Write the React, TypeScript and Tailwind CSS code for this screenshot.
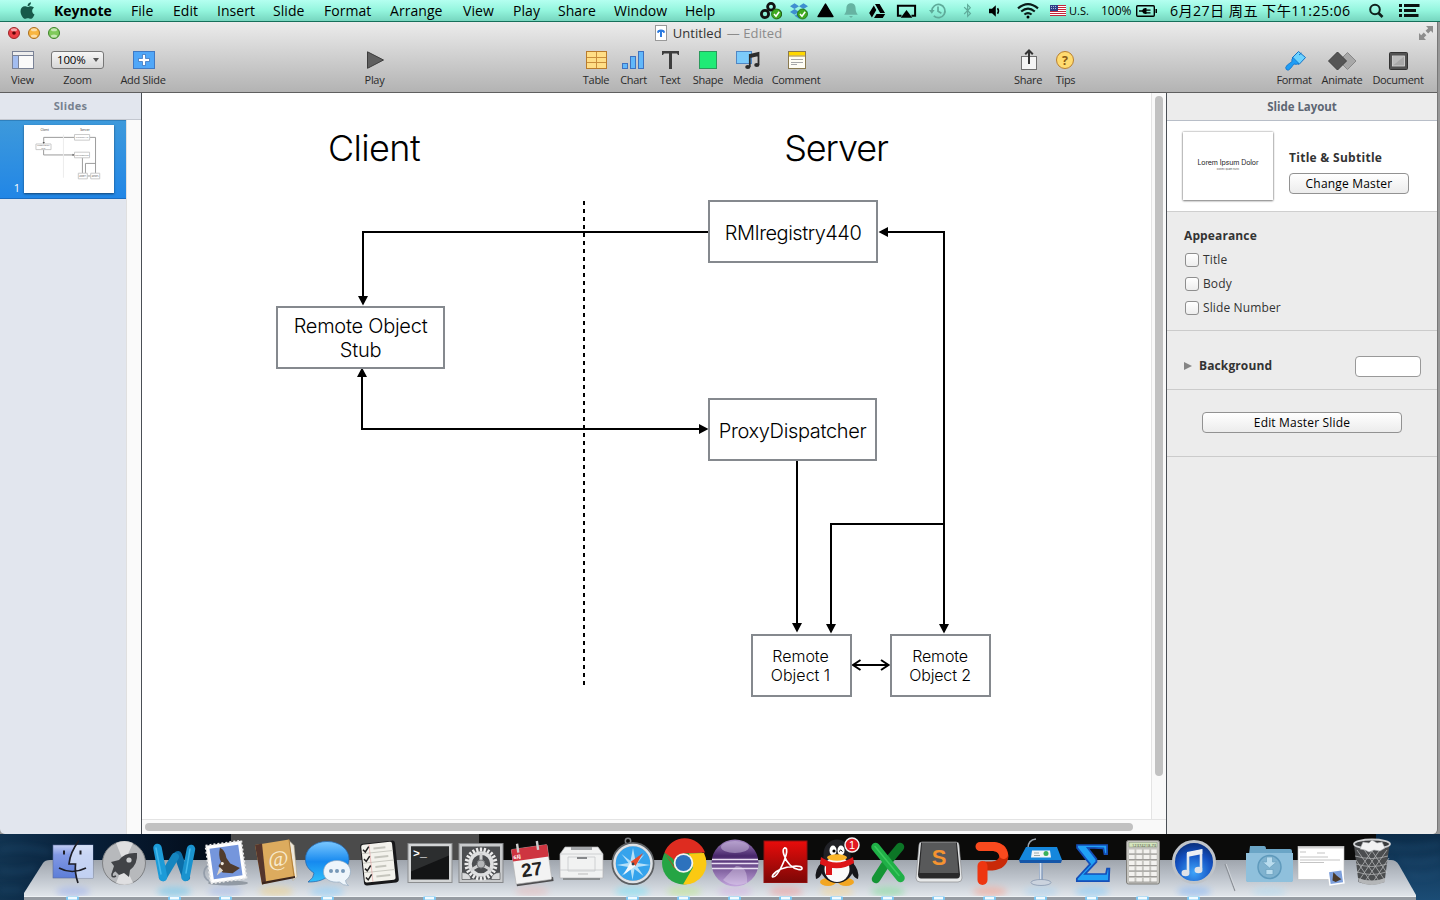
import type { ReactNode } from "react";
import { FaApple, FaDropbox, FaBluetoothB } from "react-icons/fa";

const menus: [string, string][] = [
  ["File", "w-[42px]"],
  ["Edit", "w-[44px]"],
  ["Insert", "w-[56px]"],
  ["Slide", "w-[51px]"],
  ["Format", "w-[66px]"],
  ["Arrange", "w-[73px]"],
  ["View", "w-[50px]"],
  ["Play", "w-[45px]"],
  ["Share", "w-[56px]"],
  ["Window", "w-[71px]"],
  ["Help", "w-[75px]"],
];

function BarIcon({ x, w, cls, children }: { x: number; w: number; cls: string; children: ReactNode }) {
  return (
    <svg viewBox={`${x} 0 ${w} 22`} className={`h-[22px] shrink-0 overflow-visible ${cls}`}>
      {children}
    </svg>
  );
}

function Check({ x, y }: { x: number; y: number }) {
  return (
    <g>
      <circle cx={x} cy={y} r="5" fill="#3faa22" stroke="#1f6b10" strokeWidth=".8" />
      <path d={`M${x - 2.5} ${y}l2 2.2 3.2-4.4`} fill="none" stroke="#fff" strokeWidth="1.6" />
    </g>
  );
}

function MenuBar() {
  return (
    <header className="flex h-[22px] shrink-0 items-center overflow-hidden border-b border-[#17705b] bg-linear-to-b from-[#b4fff0] via-[#93f5dd] to-[#76d6bf] text-[14px] leading-[21px] whitespace-nowrap text-black">
      <div className="flex w-[54px] shrink-0 pl-[18px]">
        <FaApple className="h-[19px] w-[19px] text-[#17594a]" />
      </div>
      <div className="w-[77px] shrink-0 text-[14px] font-bold">Keynote</div>
      {menus.map(([label, w]) => (
        <div key={label} className={`shrink-0 tracking-[0.05px] ${w}`}>
          {label}
        </div>
      ))}
      <BarIcon x={760} w={30} cls="w-[30px]">
        <g fill="none" stroke="#111" strokeWidth="2.8">
          <circle cx="771" cy="6.800" r="3.400" />
          <circle cx="765" cy="14" r="3.600" />
          <circle cx="777" cy="14" r="3.600" />
        </g>
        <Check x={776.5} y={14} />
      </BarIcon>
      <div className="relative h-[22px] w-[27px] shrink-0 pt-[2px]">
        <FaDropbox className="h-[18px] w-[18px] text-[#3f8fd0]" />
        <svg viewBox="790 0 27 22" className="absolute inset-0 h-[22px] w-[27px]">
          <Check x={802.5} y={14} />
        </svg>
      </div>
      <BarIcon x={817} w={27} cls="w-[27px]">
        <path d="M825.5 4l7.500 12.500h-15z" fill="#000" stroke="#000" strokeWidth="1.400" strokeLinejoin="round" />
      </BarIcon>
      <BarIcon x={844} w={25} cls="w-[25px]">
        <path d="M851 3.300c3.200 0 4.600 2.200 4.600 5 0 3.200.8 4.500 2.200 6.500h-13.600c1.400-2 2.200-3.300 2.200-6.500 0-2.800 1.400-5 4.600-5zM849 16h4l-2 2z" fill="#66b3a2" />
      </BarIcon>
      <BarIcon x={869} w={28} cls="w-[28px]">
        <path d="M875 4h4.600l5.400 9h-4.800zM873.800 5.500l2.500 4.500-4.400 7.500-2.700-4.500zM876.500 14h8.700l-2.500 4h-8.700z" fill="#000" />
      </BarIcon>
      <BarIcon x={897} w={32} cls="w-[32px]">
        <path d="M901.500 15.800h-3.600v-10h17.200v10h-3.600" fill="none" stroke="#000" strokeWidth="2" />
        <path d="M906.500 10l5.800 7.800h-11.600z" fill="#000" />
      </BarIcon>
      <BarIcon x={929} w={34} cls="w-[34px]">
        <path d="M931.800 11a6.600 6.600 0 1 1 2 4.800M938 6.500v4.800l3.400 2" fill="none" stroke="#5fab9a" strokeWidth="1.700" />
        <path d="M929 10h5.600l-2.800 3.800z" fill="#5fab9a" />
      </BarIcon>
      <div className="flex w-[26px] shrink-0">
        <FaBluetoothB className="h-[15px] w-[9px] text-[#5fab9a]" />
      </div>
      <BarIcon x={989} w={28} cls="w-[28px]">
        <path d="M989 8.800h3l3.800-3.600v11.600l-3.800-3.600h-3z" fill="#000" />
        <path d="M997.500 8.300q2 2.700 0 5.400" fill="none" stroke="#000" strokeWidth="1.500" />
      </BarIcon>
      <BarIcon x={1017} w={33} cls="w-[33px]">
        <g fill="none" stroke="#0a1c18" strokeWidth="2.200">
          <path d="M1018 8.300q10-8.500 20 0M1021.200 11.500q6.800-5.600 13.600 0M1024.400 14.500q3.600-2.800 7.200 0" />
        </g>
        <circle cx="1028" cy="17" r="1.500" />
      </BarIcon>
      <BarIcon x={1050} w={19} cls="w-[19px]">
        <rect x="1050" y="5" width="16" height="11" fill="#fff" />
        <path d="M1050 5.500h16M1050 7.500h16M1050 9.500h16M1050 11.500h16M1050 13.500h16M1050 15.500h16" stroke="#c2263a" strokeWidth="1" />
        <rect x="1050" y="5" width="8" height="6" fill="#2c3f87" />
        <path d="M1051 6.500h6M1051 8.500h6" stroke="#cdd4ee" strokeWidth=".8" strokeDasharray="1 1" />
      </BarIcon>
      <div className="w-[32px] shrink-0 text-[11px]">U.S.</div>
      <div className="w-[35px] shrink-0 text-[12px]">100%</div>
      <BarIcon x={1136} w={34} cls="w-[34px]">
        <rect x="1136.700" y="5.700" width="17.600" height="10.600" rx="1" fill="none" stroke="#000" strokeWidth="1.400" />
        <path d="M1155.500 9h1.500v4h-1.500zM1139 10.300h3.200q1-2.300 3.300-2.300h1v1.500h4v1.300h-4v1.400h4v1.300h-4v.5h-1q-2.300 0-3.300-2.200h-3.200z" />
      </BarIcon>
      <div className="w-[199px] shrink-0 text-[14.200px] tracking-[0.4px]">6月27日 周五 下午11:25:06</div>
      <BarIcon x={1369} w={30} cls="w-[30px]">
        <circle cx="1375" cy="9.500" r="4.800" fill="none" stroke="#10201c" strokeWidth="2" />
        <path d="M1378.500 13l4 4" stroke="#10201c" strokeWidth="2.600" />
      </BarIcon>
      <BarIcon x={1399} w={24} cls="w-[24px]">
        <path d="M1399 5.500h3M1399 10.500h3M1399 15.500h3M1404 5.500h15.500M1404 10.500h12M1404 15.500h14.500" stroke="#0a1210" strokeWidth="2.800" />
      </BarIcon>
    </header>
  );
}

function Tool({ label, x, w, cls, children }: { label: string; x: number; w: number; cls: string; children: ReactNode }) {
  return (
    <div className={`flex shrink-0 flex-col items-center ${cls}`}>
      <svg viewBox={`${x} 48 ${w} 24`} className="h-6 w-full overflow-visible">
        {children}
      </svg>
      <span className="mt-px text-[11px] leading-[14px] tracking-[-0.3px] whitespace-nowrap text-[#2b2b2b]">{label}</span>
    </div>
  );
}

function TitleBar() {
  return (
    <div className="h-[71px] shrink-0 border-b border-[#5f5f5f] bg-linear-to-b from-[#ececec] to-[#b3b3b3]">
      <div className="relative flex h-[22px] items-center justify-center text-[13px]">
        <svg viewBox="0 22 62 22" className="absolute top-0 left-0 h-[22px] w-[62px]">
          <circle cx="14" cy="33" r="5.500" fill="#ee3f45" stroke="#9c2527" />
          <circle cx="14" cy="33" r="1.800" fill="#5e0508" />
          <circle cx="34" cy="33" r="5.500" fill="#f8b53f" stroke="#a86d1e" />
          <circle cx="54" cy="33" r="5.500" fill="#7fca5a" stroke="#3d822a" />
          <g fill="#fff" opacity=".55">
            <ellipse cx="14" cy="29.700" rx="3" ry="1.500" />
            <ellipse cx="34" cy="29.700" rx="3" ry="1.500" />
            <ellipse cx="54" cy="29.700" rx="3" ry="1.500" />
            <ellipse cx="34" cy="36" rx="3" ry="1.500" />
            <ellipse cx="54" cy="36" rx="3" ry="1.500" />
          </g>
        </svg>
        <svg viewBox="655 25 12 16" className="h-4 w-3">
          <rect x="655.500" y="25.500" width="11" height="15" fill="#fff" stroke="#999" />
          <path d="M657 32.500q0-3 4-3t4 3l-2 .5v-1h-4v1zM660 32h2v5h-2z" fill="#2d7be0" />
        </svg>
        <span className="ml-[6px] leading-[22px] tracking-[0.05px] text-[#333]">Untitled</span>
        <span className="ml-[5px] leading-[22px] tracking-[0.1px] text-[#8b8b8b]">— Edited</span>
        <svg viewBox="1418 25 16 16" className="absolute top-[3px] right-[3px] h-4 w-4">
          <path d="M1426 26h7v7l-2.200-2.200-2.600 2.600-2.600-2.600 2.600-2.600zM1419 33v7h7l-2.200-2.200 2.600-2.600-2.600-2.600-2.600 2.600z" fill="#8d8d8d" />
        </svg>
      </div>
      <div className="mt-1 flex">
        <Tool label="View" x={0} w={45} cls="w-[45px]">
          <rect x="12.500" y="51.500" width="21" height="17" fill="#fafafa" stroke="#7a8296" />
          <path d="M13 52h20v3H13z" fill="#ededed" />
          <path d="M13 56h5v12h-5z" fill="#a3bdf0" />
          <path d="M12.500 55.500h21M18.500 55.500v13" stroke="#7a8296" />
        </Tool>
        <div className="flex w-[65px] shrink-0 flex-col items-center">
          <div className="mt-[3px] mb-[3px] flex h-[18px] w-[53px] items-center rounded-[3px] border border-[#777] bg-linear-to-b from-[#f7f7f7] to-[#d6d6d6] pl-[5px] text-[11.500px] leading-4 tracking-[-0.2px] text-black">
            100%
            <span className="ml-[8px] border-x-[3px] border-t-[4px] border-x-transparent border-t-[#555]" />
          </div>
          <span className="mt-px text-[11px] leading-[14px] tracking-[-0.3px] text-[#2b2b2b]">Zoom</span>
        </div>
        <Tool label="Add Slide" x={110} w={66} cls="w-[66px]">
          <rect x="133.500" y="51.500" width="21" height="17" fill="#50a7f8" stroke="#3f79c4" />
          <path d="M142.500 54.500h3v4h4v3h-4v4h-3v-4h-4v-3h4z" fill="#fff" stroke="#2f68b4" strokeWidth=".7" />
        </Tool>
        <Tool label="Play" x={345} w={59} cls="ml-[169px] w-[59px]">
          <path d="M367.500 51.800v16.500l16-8.300z" fill="#5f5f5f" stroke="#3c3c3c" />
        </Tool>
        <Tool label="Table" x={577} w={38} cls="ml-[173px] w-[38px]">
          <rect x="586.500" y="51.500" width="20" height="17" fill="#ffde86" stroke="#b97b2c" />
          <path d="M596.500 52v16M587 57.500h19M587 62.500h19" stroke="#c98e3c" />
        </Tool>
        <Tool label="Chart" x={615} w={37} cls="w-[37px]">
          <g fill="#62b8fa" stroke="#3f72c0">
            <rect x="622.500" y="63.500" width="5" height="5" />
            <rect x="630.500" y="56.500" width="5" height="12" />
            <rect x="638.500" y="51.500" width="5" height="17" />
          </g>
        </Tool>
        <Tool label="Text" x={652} w={36} cls="w-[36px]">
          <path d="M662 51h17v4h-1l-1-1.500h-5V69h-3V53.500h-5l-1 1.500h-1z" fill="#3d3d3d" />
        </Tool>
        <Tool label="Shape" x={688} w={40} cls="w-[40px]">
          <rect x="699.500" y="51.500" width="17" height="17" fill="#1feb76" stroke="#2a9a5c" />
        </Tool>
        <Tool label="Media" x={728} w={40} cls="w-[40px]">
          <rect x="736.500" y="51.500" width="15" height="12" fill="#7ccbfb" stroke="#4f86c4" />
          <path d="M750 55l8.500-2v12M749.800 54v13M750 57l8.500-2" fill="none" stroke="#2c2c2c" strokeWidth="1.800" />
          <ellipse cx="747.800" cy="67" rx="2.600" ry="1.900" fill="#2c2c2c" />
          <ellipse cx="756.800" cy="65" rx="2.600" ry="1.900" fill="#2c2c2c" />
        </Tool>
        <Tool label="Comment" x={768} w={56} cls="w-[56px]">
          <rect x="788.500" y="51.500" width="17" height="17" fill="#fffdf4" stroke="#8a7a50" />
          <path d="M789 52h16v3.500h-16z" fill="#ffd800" />
          <path d="M789 56h16" stroke="#a08530" />
          <path d="M791 59.500h12M791 62.500h12M791 64.500h6" stroke="#a8a8a8" />
        </Tool>
        <Tool label="Share" x={1010} w={36} cls="ml-[186px] w-[36px]">
          <rect x="1021.500" y="56.500" width="15" height="13" fill="#f4f4f4" stroke="#707070" />
          <path d="M1029 64V51M1025.200 54.200l3.800-3.700 3.800 3.700" fill="none" stroke="#333" strokeWidth="2" />
        </Tool>
        <Tool label="Tips" x={1046} w={39} cls="w-[39px]">
          <circle cx="1065" cy="60" r="8.500" fill="#ffdb70" stroke="#b98030" />
          <text x="1065" y="64.500" textAnchor="middle" fontSize="12.500" fontWeight="700" fill="#8a5a14">?</text>
        </Tool>
        <Tool label="Format" x={1272} w={44} cls="ml-[187px] w-[44px]">
          <path d="M1298.500 51.500l7 6-6.500 7-7-6.500z" fill="#6ed3ff" stroke="#1272c8" strokeLinejoin="round" />
          <path d="M1293 57.500l6 6q-3 1.500-5 .5l-3.500 4.500q-2.500 3-4.200 1t1-4.500l4.700-3.500q-.7-2 1-4z" fill="#1f9df5" stroke="#1272c8" strokeWidth=".8" />
          <path d="M1299 55l2.500-2" stroke="#1272c8" />
        </Tool>
        <Tool label="Animate" x={1316} w={52} cls="w-[52px]">
          <path d="M1347.500 52.500l8.500 8.500-8.500 8.500-8.500-8.500z" fill="#a8a8a8" stroke="#888" />
          <path d="M1337.500 52l9 9-9 9-9-9z" fill="#555" stroke="#3d3d3d" />
        </Tool>
        <Tool label="Document" x={1368} w={60} cls="w-[60px]">
          <rect x="1389.500" y="52.500" width="18" height="17" rx="1" fill="#535353" stroke="#333" />
          <rect x="1392.500" y="56" width="12" height="10" fill="#a8a8a8" stroke="#ddd" strokeWidth=".8" />
          <path d="M1393 65.500v-9h11z" fill="#bcbcbc" />
        </Tool>
      </div>
    </div>
  );
}

function Connectors() {
  return (
    <>
      <g fill="none" stroke="#000" strokeWidth="2">
        <path d="M708 232H363V297" />
        <path d="M362 375V429H700" />
        <path d="M887 232H944V626" />
        <path d="M944 524H831V626" />
        <path d="M797 461V625" />
        <path d="M584 201V685" strokeDasharray="4 4" />
        <path d="M854 665H888M860.500 660l-7.500 5 7.500 5M881 660l7.500 5-7.500 5" />
      </g>
      <path
        d="M358 296h10l-5 9.500zM357 377h10l-5-9.500zM699 424v10l9.500-5zM888 227v10l-9.500-5zM939 624h10l-5 9.500zM826 624h10l-5 9.500zM792 623h10l-5 9.500z"
        fill="#000"
      />
    </>
  );
}

function SlideList() {
  return (
    <aside className="flex w-[142px] shrink-0 flex-col border-r border-[#4a4f55] bg-[#e2e6ee]">
      <div className="h-[27px] border-b border-[#c3c7cf] text-center text-[11px] leading-[26px] font-bold tracking-[0.3px] text-[#76818f]">Slides</div>
      <div className="flex min-h-0 flex-1">
        <div className="w-[126px]">
          <div className="flex h-[79px] border-y border-t-[#2f80bd] border-b-[#1a6cc0] bg-linear-to-b from-[#3d99db] to-[#2186e6]">
            <span className="w-6 self-end pr-[4px] pb-[3px] text-right text-[11px] leading-[14px] text-white">1</span>
            <svg viewBox="142 93 1009 763" preserveAspectRatio="none" className="mt-[4px] h-[68px] w-[90px] bg-white shadow-[0_1px_2px_rgba(0,0,0,.5)]">
              <g fill="none" stroke="#9a9a9a" strokeWidth="11">
                <path d="M708 232H363V305M362 369V429H708M878 232H944V634M944 524H831V634M797 461V634M852 665H890" />
                <path d="M584 201V685" stroke="#ececec" />
              </g>
              <path d="M350 285h26l-13 22zM686 416v26l22-13z" fill="#555" />
              <g fill="#fff" stroke="#c4c4c4" strokeWidth="10">
                <path d="M708 200h170v63H708zM276 306h169v63H276zM708 398h169v63H708zM751 634h101v63H751zM890 634h101v63H890z" />
              </g>
              <g fill="#333" textAnchor="middle" fontSize="36">
                <text x="374" y="165">Client</text>
                <text x="826" y="165">Server</text>
              </g>
              <g fill="#555" textAnchor="middle" fontSize="20">
                <text x="793" y="240">RMIregistry440</text>
                <text x="360" y="334">Remote Object</text>
                <text x="360" y="358">Stub</text>
                <text x="793" y="437">ProxyDispatcher</text>
                <text x="801" y="662">Remote</text>
                <text x="801" y="682">Object 1</text>
                <text x="940" y="662">Remote</text>
                <text x="940" y="682">Object 2</text>
              </g>
            </svg>
          </div>
        </div>
        <div className="flex-1 border-l border-[#e0e0e0] bg-[#fafafa]" />
      </div>
    </aside>
  );
}

function Node({ cls, children }: { cls: string; children: ReactNode }) {
  return <div className={`absolute flex items-center justify-center border-2 border-[#85898e] bg-white text-center ${cls}`}>{children}</div>;
}

function Canvas() {
  return (
    <main className="flex min-w-0 flex-1 flex-col bg-white">
      <div className="flex min-h-0 flex-1">
        <div className="relative flex-1 font-[Inter,sans-serif] font-light text-black">
          <svg viewBox="142 93 1009 727" className="absolute top-0 left-0 h-[727px] w-[1009px]">
            <Connectors />
          </svg>
          <div className="absolute top-[33px] left-[132px] w-[200px] text-center text-[36px] leading-[44px] tracking-[-0.6px]">Client</div>
          <div className="absolute top-[33px] left-[594px] w-[200px] text-center text-[36px] leading-[44px] tracking-[-1.1px]">Server</div>
          <Node cls="top-[107px] left-[566px] h-[63px] w-[170px] pt-[2px] text-[20px] tracking-[-0.5px]">RMIregistry440</Node>
          <Node cls="top-[213px] left-[134px] h-[63px] w-[169px] pt-px text-[20px] leading-6 tracking-[-0.25px]">
            Remote Object
            <br />
            Stub
          </Node>
          <Node cls="top-[305px] left-[566px] h-[63px] w-[169px] pt-[2px] text-[20px] tracking-[-0.35px]">ProxyDispatcher</Node>
          <Node cls="top-[541px] left-[609px] h-[63px] w-[101px] pr-[2px] text-[16px] leading-[19px]">
            Remote
            <br />
            Object 1
          </Node>
          <Node cls="top-[541px] left-[748px] h-[63px] w-[101px] pr-px text-[16px] leading-[19px] tracking-[-0.15px]">
            Remote
            <br />
            Object 2
          </Node>
        </div>
        <div className="w-[15px] border-l border-[#e4e4e4] bg-[#f9f9f9] pt-[3px] pl-[3px]">
          <div className="h-[680px] w-2 rounded-full bg-[#c1c1c1]" />
        </div>
      </div>
      <div className="h-[15px] border-t border-[#e4e4e4] bg-[#f9f9f9] pt-[3px] pl-[3px]">
        <div className="h-2 w-[988px] rounded-full bg-[#c1c1c1]" />
      </div>
    </main>
  );
}

function Inspector() {
  return (
    <aside className="flex w-[271px] shrink-0 flex-col border-l border-[#4a4f55] bg-[#ececec] text-[12px] tracking-[0.12px] text-[#333]">
      <div className="h-[28px] border-b border-[#b8bec8] text-center text-[11.500px] leading-[28px] font-bold tracking-[-0.05px] text-[#5d6673]">Slide Layout</div>
      <div className="flex h-[91px] border-b border-[#cfcfcf] bg-white">
        <div className="mt-[11px] ml-[16px] flex h-[68px] w-[90px] flex-col items-center bg-white pt-[26px] font-[Inter,sans-serif] tracking-normal shadow-[0_0_2px_rgba(0,0,0,.45),0_1px_2px_rgba(0,0,0,.4)]">
          <span className="text-[7px] leading-[9px] tracking-[-0.1px] whitespace-nowrap text-[#222]">Lorem Ipsum Dolor</span>
          <span className="text-[2.600px] leading-[5px] text-[#555]">Donec quam nunc</span>
        </div>
        <div className="ml-[16px] pt-[28px]">
          <div className="leading-[18px] font-bold tracking-[0.28px]">Title &amp; Subtitle</div>
          <button className="mt-[6px] block h-[21px] w-[120px] rounded-[4px] border border-[#929292] bg-linear-to-b from-white to-[#ececec] leading-[18px] tracking-[0.18px] text-black">Change Master</button>
        </div>
      </div>
      <div className="flex h-[119px] flex-col border-b border-[#cbcbcb] pt-[12px] pl-[17px]">
        <div className="h-6 leading-6 font-bold">Appearance</div>
        {["Title", "Body", "Slide Number"].map((t) => (
          <label key={t} className="flex h-6 items-center leading-6">
            <span className="mr-[4px] ml-px h-[14px] w-[14px] rounded-[3px] border border-[#8e8e8e] bg-linear-to-b from-white to-[#ededed]" />
            {t}
          </label>
        ))}
      </div>
      <div className="flex h-[59px] items-center border-b border-[#cbcbcb] pt-[12px] pl-[17px]">
        <span className="border-y-[4.500px] border-l-[8px] border-y-transparent border-l-[#858585]" />
        <span className="ml-[7px] w-[156px] font-bold">Background</span>
        <span className="h-[21px] w-[66px] rounded-[4px] border border-[#999] bg-white" />
      </div>
      <div className="flex h-[67px] justify-center border-b border-[#cbcbcb] pt-[22px]">
        <button className="h-[21px] w-[200px] rounded-[4px] border border-[#929292] bg-linear-to-b from-white to-[#ececec] leading-[18px] tracking-[0.18px] text-black">Edit Master Slide</button>
      </div>
    </aside>
  );
}

function Slot({ x, w = 51, cls = "w-[51px]", children }: { x: number; w?: number; cls?: string; children: ReactNode }) {
  return (
    <svg viewBox={`${x} 834 ${w} 66`} className={`h-[66px] shrink-0 overflow-visible ${cls}`}>
      {children}
    </svg>
  );
}

const running = [73, 175, 226, 328, 430, 633, 684, 735, 786, 837, 888, 939, 990, 1041, 1092, 1143, 1194];
const reflections: [number, string][] = [
  [73, "#9fb2ec"],
  [174, "#6fc4ea"],
  [225, "#a9bdea"],
  [276, "#ecd08e"],
  [327, "#8fcdf8"],
  [532, "#e6c0c0"],
  [632, "#7fe0f6"],
  [684, "#bfe692"],
  [735, "#d3b2e4"],
  [786, "#eea0a0"],
  [837, "#f4d79a"],
  [888, "#86dc9f"],
  [990, "#f5a594"],
  [1041, "#aed4f0"],
  [1092, "#8accf8"],
  [1194, "#8ab8f4"],
  [1269, "#b6daee"],
];

function Dock() {
  const spokes = Array.from({ length: 24 }, (_, i) => i * 15);
  return (
    <footer className="relative h-[66px] shrink-0 overflow-hidden bg-[#0b0b0a]">
      <svg viewBox="0 834 1440 66" className="absolute inset-0 h-[66px] w-[1440px]">
        <defs>
          <linearGradient id="seaL" x1="0" y1="0" x2="1" y2="0">
            <stop offset="0" stopColor="#113350" />
            <stop offset=".35" stopColor="#08203a" />
            <stop offset="1" stopColor="#020a16" />
          </linearGradient>
          <linearGradient id="seaR" x1="0" y1="0" x2="0" y2="1">
            <stop offset="0" stopColor="#0c2c49" />
            <stop offset="1" stopColor="#1b4c75" />
          </linearGradient>
          <linearGradient id="shelf" x1="0" y1="0" x2="0" y2="1">
            <stop offset="0" stopColor="#9fa5ad" />
            <stop offset=".5" stopColor="#bfc5cd" />
            <stop offset="1" stopColor="#e2e7ec" />
          </linearGradient>
          <filter id="soft" x="-30%" y="-60%" width="160%" height="220%">
            <feGaussianBlur stdDeviation="3" />
          </filter>
        </defs>
        <rect x="0" y="834" width="231" height="66" fill="url(#seaL)" />
        <rect x="231" y="834" width="248" height="30" fill="#4b4b4b" />
        <rect x="1376" y="834" width="64" height="66" fill="url(#seaR)" />
        <g fill="none" stroke="#2f6088" strokeWidth="3" opacity=".4" filter="url(#soft)">
          <path d="M1385 845q20 6 55-1M1400 860q20 5 40-2M1408 874q16 6 32-2M0 850q20-5 50 2M0 870q18 4 36-2M0 890h22" />
        </g>
        <path d="M50 860H1391Q1396 860 1399 865L1416 895V897H24V893L43 863Q45 860 50 860z" fill="url(#shelf)" />
        {reflections.map(([x, c]) => (
          <ellipse key={x} cx={x} cy="891.500" rx="17" ry="5" fill={c} opacity=".6" filter="url(#soft)" />
        ))}
        <path d="M24 896.500H1416" stroke="#eef2f5" />
        <path d="M24 897h1392v3H24z" fill="#969ca3" />
        {running.map((x) => (
          <g key={x}>
            <rect x={x - 7} y="896.500" width="13" height="3.500" rx="1" fill="#7cc8f4" />
            <rect x={x - 5} y="897" width="9" height="2.500" fill="#f2fbff" />
          </g>
        ))}
      </svg>
      <div className="relative flex pl-[48px]">
        <Slot x={48}>
          <defs>
            <linearGradient id="fin" x1="0" y1="0" x2="0" y2="1">
              <stop offset="0" stopColor="#c3cef4" />
              <stop offset=".3" stopColor="#8198e4" />
              <stop offset="1" stopColor="#5d7ed8" />
            </linearGradient>
          </defs>
          <rect x="53" y="845" width="40" height="33" fill="url(#fin)" stroke="#5b6c9c" strokeWidth=".6" />
          <path d="M76 845h17v33H76l-1-14h-6q1-12 7-19z" fill="#dbe5f8" opacity=".8" />
          <path d="M79 840.500q-9 12-10 23.500h6.500q-1 9 2.500 19M59 868q13 7 27 0" fill="none" stroke="#1e1e26" strokeWidth="1.700" />
          <path d="M64 850.500v4M80.500 850.500v4" stroke="#1e1e26" strokeWidth="2" />
        </Slot>
        <Slot x={99}>
          <circle cx="124" cy="863" r="21.500" fill="#b7b9bc" stroke="#7e8083" />
          <path d="M124 863L116 843a21 21 0 0 1 17 0zM124 863l-8 20a21 21 0 0 0 17 0z" fill="#e9e9ea" opacity=".8" />
          <path d="M137 853q1 11-7 17l-1 7-5-4-5 2-4-4-3 1 2-6-3-4 8-2q6-8 18-7z" fill="#414347" />
          <circle cx="129" cy="860" r="2.600" fill="#c9cbcd" />
          <path d="M116 870q-4 2-4 5t4 1" fill="none" stroke="#414347" strokeWidth="1.600" />
        </Slot>
        <Slot x={150}>
          <g fill="none" strokeLinecap="round" strokeLinejoin="round">
            <path d="M178 855l8 22" stroke="#0c6ea8" strokeWidth="8" />
            <path d="M163 877l12-20" stroke="#1585bf" strokeWidth="8" />
            <path d="M157.500 848l5.500 29" stroke="#1c9bd8" strokeWidth="8.500" />
            <path d="M191 849l-5.500 28" stroke="#1a93cf" strokeWidth="8.500" />
            <path d="M156 848l5 26M190 849l-4 24" stroke="#46b9ec" strokeWidth="1.500" />
          </g>
        </Slot>
        <Slot x={201}>
          <ellipse cx="228" cy="883" rx="20" ry="2.500" fill="#5d6772" opacity=".5" />
          <circle cx="213" cy="873" r="9" fill="none" stroke="#8b95a2" strokeWidth="1.800" opacity=".8" />
          <g transform="rotate(-8 226 862)">
            <rect x="208" y="843" width="36" height="38" fill="#fff" stroke="#e8e8e8" strokeWidth="2" strokeDasharray="2 2" />
            <rect x="211.500" y="846.500" width="29" height="31" fill="#7596dc" />
            <path d="M222 847q5 3 5 11l3 6 9 6-8 4-10-2-3-7 3-4q-2-6 1-14z" fill="#513c2c" />
            <path d="M219 866l-4 8 7-4z" fill="#dfd6c8" />
            <circle cx="222" cy="863" r="1.600" fill="#efe7da" />
          </g>
        </Slot>
        <Slot x={252}>
          <path d="M289 840.500l5 5 3 31-4 4z" fill="#eee8dc" stroke="#b6a78a" strokeWidth=".6" />
          <path d="M255 845l34-5.500 6 37-33 8z" fill="#dcab5e" />
          <path d="M289 839.500l5 37" stroke="#b2803a" />
          <path d="M255 845l7-1.500 4 38-4 3z" fill="#54352c" />
          <path d="M262 884.500l33-6.500v-2l-33 6z" fill="#3b251c" />
          <text x="278.500" y="866" textAnchor="middle" fontSize="22" fill="#f8ecd0" fontFamily="Liberation Serif" transform="rotate(-4 278 862)">@</text>
        </Slot>
        <Slot x={303}>
          <defs>
            <linearGradient id="msg" x1="0" y1="0" x2="0" y2="1">
              <stop offset="0" stopColor="#7bc8ff" />
              <stop offset=".5" stopColor="#1689ef" />
              <stop offset="1" stopColor="#2fc0fb" />
            </linearGradient>
          </defs>
          <path d="M327 841.500c13 0 22 8 22 17.500s-9 18-20 18c-4 0-6 5-21 5q6-4 6-9c-6-4-8.500-8-8.500-14 0-10 9-17.500 21.500-17.500z" fill="url(#msg)" stroke="#2a69ad" strokeWidth=".8" />
          <path d="M337 860.500c8 0 13.500 5 13.500 11 0 4-2 7-5 9q0 3 3 5-6 0-9-3.500c-9 1-16-3-16-10 0-6.500 5-11.500 13.500-11.500z" fill="#eef5fb" stroke="#91a9c0" strokeWidth=".7" />
          <g fill="#7698b8">
            <circle cx="331" cy="871" r="2" />
            <circle cx="337" cy="871" r="2" />
            <circle cx="343" cy="871" r="2" />
          </g>
        </Slot>
        <Slot x={354}>
          <g transform="rotate(-6 380 863)">
            <rect x="362" y="842" width="35" height="42" rx="3" fill="#18181a" />
            <rect x="363" y="843" width="31" height="38" rx="2" fill="#f3f2ec" />
            <path d="M363 852h31M363 861.500h31M363 871h31" stroke="#c8c8c0" />
            <path d="M371 843v38" stroke="#e5a8a8" strokeWidth=".7" />
            <path d="M364.500 848l2 2.500 4-5M364.500 857.500l2 2.500 4-5M364.500 867l2 2.500 4-5M364.500 876l2 2.500 4-5" fill="none" stroke="#222" strokeWidth="1.500" />
            <path d="M375 848h12M375 857h14M375 866.500h11M375 876h14" stroke="#c5c5bd" strokeWidth="2" />
          </g>
        </Slot>
        <Slot x={405}>
          <rect x="408" y="843.500" width="44" height="39" fill="#d3d5d6" stroke="#8c8e90" />
          <rect x="411" y="846.500" width="38" height="33" fill="#131415" />
          <path d="M411 846.500h38v9l-38 16z" fill="#333536" opacity=".8" />
          <text x="413" y="857" fontSize="11.500" fontWeight="700" fontFamily="Liberation Mono" fill="#fff">&gt;_</text>
        </Slot>
        <Slot x={456}>
          <rect x="459" y="843.500" width="44" height="39" fill="#c8cacc" stroke="#85878a" />
          <rect x="462" y="846.500" width="38" height="33" fill="#4c4e51" />
          <g stroke="#ececec" strokeWidth="2.300">
            {spokes.map((a) => (
              <path key={a} d="M481 851.500v-4" transform={`rotate(${a} 481 864)`} />
            ))}
          </g>
          <circle cx="481" cy="864" r="11" fill="none" stroke="#dedfe0" strokeWidth="3.500" />
          <path d="M481 864v-11M481 864l-10 6M481 864l10 6" stroke="#cfd0d1" strokeWidth="3" />
          <circle cx="481" cy="864" r="4" fill="#b3b5b7" stroke="#747679" />
          <path d="M462 879.500v-7q8 0 9 7zM500 879.500v-7q-8 0-9 7z" fill="#d9dadb" stroke="#505254" strokeWidth=".6" />
        </Slot>
        <Slot x={507}>
          <g transform="rotate(-8 531 864)">
            <path d="M514 880h37v4h-37z" fill="#4e4e50" />
            <rect x="513.500" y="847" width="36" height="35" rx="1" fill="#f3f3f3" stroke="#b1b1b1" strokeWidth=".6" />
            <path d="M513.500 847h36v12h-36z" fill="#ce3540" />
            <path d="M520 842v9M540 842v9" stroke="#cdcdcd" strokeWidth="2.400" />
            <text x="514.500" y="857" fontSize="5" fontWeight="700" fill="#fff">6月</text>
            <text x="531" y="876" textAnchor="middle" fontSize="19" fontWeight="700" fill="#222" fontFamily="Liberation Sans">27</text>
          </g>
        </Slot>
        <Slot x={558}>
          <path d="M565 847h33l5 7v24h-43v-24z" fill="#f1f2f2" stroke="#b1b3b5" strokeWidth=".7" />
          <path d="M571 847h21v3h-21z" fill="#a3a6a9" />
          <path d="M560 854h43M560 870h43M568 857h27v14h-27z" fill="none" stroke="#c6c8ca" strokeWidth=".8" />
          <path d="M577 857h10v2h-10z" fill="#85878a" />
          <path d="M563 878h37v2h-37z" fill="#8c8f91" />
          <path d="M578 874h10" stroke="#bbb" />
        </Slot>
        <Slot x={609}>
          <circle cx="628" cy="841" r="2.700" fill="none" stroke="#7c7e80" strokeWidth="1.500" />
          <circle cx="633" cy="863.500" r="19.500" fill="#35a3ec" stroke="#5d6063" strokeWidth="4" />
          <circle cx="633" cy="863.500" r="18.500" fill="none" stroke="#dfe2e5" strokeWidth="2.500" />
          <path d="M633 848l2.500 13 9-7-7 9 13 2-13 2 6 9-9-7-2 11-2-11-9 7 7-9-12-2 12-2-7-9 9 7z" fill="#d4effc" opacity=".8" />
          <path d="M643 853l-7.500 13-5-4z" fill="#e74a2c" />
          <path d="M623.500 875l7-13 5 4z" fill="#f4f7fa" />
          <circle cx="633" cy="864" r="1.400" fill="#345" />
        </Slot>
        <Slot x={660}>
          <circle cx="683.500" cy="863" r="21.500" fill="#25a544" />
          <path d="M664.500 852.500a21.500 21.500 0 0 1 40.500 0l-21.500 1-9 15z" fill="#de2c20" />
          <path d="M664.800 852.800l10.200 15 4 4-6-13z" fill="#25a544" />
          <path d="M704 853a21.500 21.500 0 0 1-21 31.500l10-17-4-14z" fill="#fbc912" />
          <circle cx="683.500" cy="863" r="9.800" fill="#f5f5f0" />
          <circle cx="683.500" cy="863" r="8" fill="#2d72bd" />
        </Slot>
        <Slot x={711}>
          <defs>
            <linearGradient id="ecl" x1="0" y1="0" x2="0" y2="1">
              <stop offset="0" stopColor="#a184bf" />
              <stop offset=".35" stopColor="#48276b" />
              <stop offset="1" stopColor="#c3a6dd" />
            </linearGradient>
          </defs>
          <circle cx="735" cy="863" r="23.500" fill="url(#ecl)" />
          <path d="M712 859.500h46M711.500 863.500h47M712 868.500h46" stroke="#eadff3" strokeWidth="1.300" />
          <ellipse cx="735" cy="847" rx="14" ry="6" fill="#d9cbe8" opacity=".45" />
          <path d="M736 866q12 0 11 17-14 5-24-3z" fill="#f1e9f8" opacity=".35" />
        </Slot>
        <Slot x={762}>
          <defs>
            <linearGradient id="acr" x1="0" y1="0" x2="0" y2="1">
              <stop offset="0" stopColor="#e90c0b" />
              <stop offset="1" stopColor="#7c0706" />
            </linearGradient>
          </defs>
          <rect x="764" y="841" width="43" height="41.500" fill="url(#acr)" stroke="#8f1010" />
          <path d="M785 848c-4 0-1 11 5 17 5 5 13 6 12 3s-14-2-21 1-10 8-8 8c5 0 15-22 13.500-28q-.5-1.500-2.500-1z" fill="none" stroke="#fff" strokeWidth="1.700" />
        </Slot>
        <Slot x={813}>
          <ellipse cx="828" cy="882" rx="8" ry="4" fill="#f2a622" />
          <ellipse cx="846" cy="882" rx="8" ry="4" fill="#f2a622" />
          <path d="M822 862q-8 8-6 17 4-1 6-6zM852 862q8 8 6 17-4-1-6-6z" fill="#15161a" />
          <ellipse cx="837" cy="866" rx="17" ry="17" fill="#17181d" />
          <ellipse cx="837" cy="854" rx="13.500" ry="14.500" fill="#202126" />
          <ellipse cx="837" cy="869" rx="12.500" ry="13" fill="#fafafa" />
          <ellipse cx="833" cy="850.500" rx="3.500" ry="5" fill="#fff" />
          <ellipse cx="841" cy="850.500" rx="3.500" ry="5" fill="#fff" />
          <circle cx="834" cy="851" r="1.600" />
          <path d="M839 851.500q1.800-3 3.500 0" fill="none" stroke="#000" />
          <ellipse cx="837" cy="857.500" rx="10" ry="3.200" fill="#fbb62a" />
          <path d="M821 857q15 11 32 0l1 6q-16 10-34 1zM826 864l6 2v9h-6z" fill="#dd1518" />
          <circle cx="852" cy="845" r="7" fill="#e01921" stroke="#f4f4f4" strokeWidth="1.500" />
          <text x="852" y="849" textAnchor="middle" fontSize="11" fill="#fff" fontFamily="Liberation Sans">1</text>
        </Slot>
        <Slot x={864}>
          <g fill="none" strokeLinecap="round" strokeWidth="8.500">
            <path d="M900 847l-10 12" stroke="#0c7526" />
            <path d="M885 865l-9 14" stroke="#159535" />
            <path d="M875.500 847l25 31" stroke="#20b047" />
            <path d="M875 846.500l24 29" stroke="#3cc95f" strokeWidth="1.500" />
          </g>
        </Slot>
        <Slot x={915}>
          <path d="M922 842h34q3 0 3 3l3 33q0 4-4 4h-38q-4 0-4-4l3-33q0-3 3-3z" fill="#e6e8e9" stroke="#8c8e90" strokeWidth=".7" />
          <path d="M921 842.500h36l3 32q0 4-3 4h-36q-3 0-3-4z" fill="#29292a" />
          <path d="M922 843h34l2.500 30h-39z" fill="#58595a" />
          <text x="939" y="865" textAnchor="middle" fontSize="22" fontWeight="700" fill="#f59330" fontFamily="Liberation Sans">S</text>
        </Slot>
        <Slot x={966}>
          <g fill="none" strokeWidth="9">
            <path d="M984 866h8q11-1 12-10-1-9-11-9.500" stroke="#c92a08" />
            <path d="M980 846.500h14q8 1 9.500 8" stroke="#fa4a1e" strokeLinecap="round" />
            <path d="M982.500 866v14" stroke="#ee3510" strokeLinecap="round" strokeWidth="10" />
          </g>
        </Slot>
        <Slot x={1017}>
          <path d="M1028 848q0-8 8-9" fill="none" stroke="#9aa4ad" strokeWidth="1.600" />
          <path d="M1041 862v21" stroke="#8fa3c0" strokeWidth="4" />
          <path d="M1040.500 862v21" stroke="#dbe4f0" strokeWidth="1.500" />
          <ellipse cx="1041" cy="882.500" rx="10" ry="3" fill="#cbd3de" stroke="#7f91aa" strokeWidth=".7" />
          <path d="M1026 847h31l5 13h-43z" fill="#1587dd" />
          <path d="M1019 860h43l-1 3h-41z" fill="#1556a8" />
          <path d="M1032 850.500h18l1 7h-20z" fill="#f2f5f8" />
          <circle cx="1046" cy="853.500" r="2.500" fill="#3ab15a" />
          <path d="M1034 853h5M1034 855.500h6" stroke="#9aa" />
        </Slot>
        <Slot x={1068}>
          <text x="1093.500" y="880.500" textAnchor="middle" fontSize="54" fontWeight="700" fill="#20a1f5" stroke="#154fb8" strokeWidth="1.700" fontFamily="Liberation Serif" textLength="37" lengthAdjust="spacingAndGlyphs">Σ</text>
        </Slot>
        <Slot x={1119}>
          <rect x="1126.500" y="840.500" width="33" height="43.500" rx="2" fill="#c5c4bf" stroke="#7f7e7a" />
          <rect x="1129" y="842.500" width="28" height="4.500" fill="#d5e6bd" stroke="#8c9880" strokeWidth=".5" />
          <text x="1156" y="846.500" textAnchor="end" fontSize="4" fill="#444">12374218.73</text>
          <g stroke="#f3f2ef" strokeWidth="4" strokeDasharray="5.500 1.900">
            <path d="M1129 851.500h28M1129 857h28M1129 863h28M1129 868.500h28M1129 874h28M1129 880h28" />
          </g>
          <g stroke="#8b8a86" strokeWidth=".7" fill="none">
            <path d="M1129 854h28M1129 859.500h28M1129 865.500h28M1129 871h28M1129 876.500h28M1129 882h28" />
          </g>
        </Slot>
        <Slot x={1170}>
          <defs>
            <radialGradient id="itn" cx=".5" cy=".75" r=".75">
              <stop offset="0" stopColor="#3fa4fa" />
              <stop offset=".6" stopColor="#1350c0" />
              <stop offset="1" stopColor="#082a72" />
            </radialGradient>
          </defs>
          <circle cx="1194" cy="862" r="20.500" fill="url(#itn)" stroke="#bfc3c8" strokeWidth="3" />
          <path d="M1188 872v-18l13-3v18" fill="none" stroke="#e3e6ec" strokeWidth="2.600" />
          <path d="M1187 852l15.300-3v5l-15.300 3z" fill="#eceff3" />
          <ellipse cx="1185.500" cy="873" rx="4" ry="3.300" fill="#dfe2e8" />
          <ellipse cx="1198.500" cy="870" rx="4" ry="3.300" fill="#dfe2e8" />
        </Slot>
        <Slot x={1221} w={23} cls="w-[23px]">
          <path d="M1225 864l10 27" stroke="#8b9097" strokeWidth="1.200" />
          <path d="M1226.200 864l10 27" stroke="#d5d9de" strokeWidth=".8" />
        </Slot>
        <Slot x={1244}>
          <path d="M1250 846h14q2 0 2 3h24q2 0 2 2l1 28q0 3-3 3h-41q-3 0-3-3z" fill="#6ba5c6" />
          <path d="M1246 853h47v27q0 2-2 2h-42q-3 0-3-2z" fill="#8fc0dc" />
          <circle cx="1269.500" cy="867" r="11.500" fill="#7fb2cf" stroke="#5f9abc" strokeWidth="1.500" />
          <path d="M1266.500 857h6v5h4l-7 6-7-6h4zM1266 869.500h7v5h-7z" fill="#b9dcee" stroke="#6ba0be" strokeWidth=".7" />
        </Slot>
        <Slot x={1295}>
          <rect x="1298" y="846.500" width="46" height="33" fill="#fff" stroke="#bbb" strokeWidth=".6" />
          <path d="M1298 846.500h46v2h-46z" fill="#d4d4d4" />
          <path d="M1300 852h6M1300 857h28M1300 860h40M1300 862.500h24M1317 853h8" stroke="#aaa" strokeWidth=".7" />
          <g transform="rotate(-8 1336 877)">
            <rect x="1329" y="870.500" width="14" height="13.500" fill="#7ea0dc" stroke="#fff" strokeWidth="1.500" />
            <path d="M1334 872l3 4 4 4-6 2-3-2z" fill="#4b3a2a" />
          </g>
        </Slot>
        <Slot x={1346}>
          <path d="M1354 845l4.500 37q13 5 26 0l5-37z" fill="#4b4d4f" />
          <g stroke="#d3d4d5" strokeWidth=".8" opacity=".75">
            <path d="M1357 850l24 34M1363 848l21 31M1370 848l17 25M1356 860l17 25M1387 850l-24 34M1381 848l-21 31M1374 848l-17 25M1389 858l-18 27" />
            <path d="M1355 856q17 5 33 0M1356 864q16 5 31 0M1357 872q15 5 29 0" fill="none" />
          </g>
          <path d="M1358 878q14 5 27 0v4q-13 6-26 0z" fill="#b4b6b8" />
          <ellipse cx="1372" cy="844" rx="18" ry="4.500" fill="#3a3c3e" stroke="#d0d2d4" strokeWidth="1.800" />
          <path d="M1360 849l3-7 6 1 3-3 5 3 5-1 3 6-5 3-6-1-5 2-4-2z" fill="#f1f2f3" stroke="#a8abae" strokeWidth=".6" />
        </Slot>
      </div>
    </footer>
  );
}

export default function App() {
  return (
    <div className="flex h-[900px] w-[1440px] flex-col overflow-hidden bg-[#0a1c30] font-['Open_Sans','Noto_Sans_CJK_SC',sans-serif]">
      <MenuBar />
      <div className="flex h-[812px] shrink-0 bg-[#989898]">
        <div className="flex w-[1438px] shrink-0 flex-col overflow-hidden rounded-b-[5px] border-r border-[#777]">
          <TitleBar />
          <div className="flex min-h-0 flex-1">
            <SlideList />
            <Canvas />
            <Inspector />
          </div>
        </div>
      </div>
      <Dock />
    </div>
  );
}
